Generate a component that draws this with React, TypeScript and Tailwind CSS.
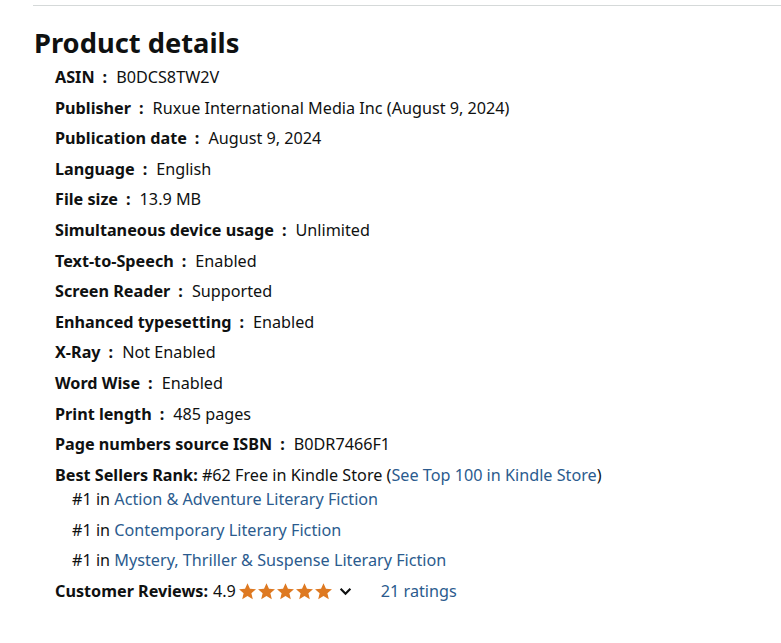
import React from 'react';

const details: [string, string][] = [
  ['ASIN', 'B0DCS8TW2V'],
  ['Publisher', 'Ruxue International Media Inc (August 9, 2024)'],
  ['Publication date', 'August 9, 2024'],
  ['Language', 'English'],
  ['File size', '13.9 MB'],
  ['Simultaneous device usage', 'Unlimited'],
  ['Text-to-Speech', 'Enabled'],
  ['Screen Reader', 'Supported'],
  ['Enhanced typesetting', 'Enabled'],
  ['X-Ray', 'Not Enabled'],
  ['Word Wise', 'Enabled'],
  ['Print length', '485 pages'],
  ['Page numbers source ISBN', 'B0DR7466F1'],
];

const ranks = [
  'Action & Adventure Literary Fiction',
  'Contemporary Literary Fiction',
  'Mystery, Thriller & Suspense Literary Fiction',
];

const Star = () => (
  <svg viewBox="0 0 24 24" className="w-[19px] h-[19px]" fill="#de7921">
    <path d="M12 1.5l3.1 7 7.6.7-5.8 5 1.8 7.5L12 17.8l-6.7 3.9 1.8-7.5-5.8-5 7.6-.7z" />
  </svg>
);

export default function App() {
  return (
    <div
      className="min-h-[643px] bg-white text-[#0f1111] text-[16.2px]"
      style={{ fontFamily: '"Noto Sans", "Open Sans", Arial, sans-serif' }}
    >
      <div className="pt-[5px] pl-[33px]">
        <div className="border-t border-[#d5d9d9]" />
      </div>

      <h2 className="ml-[34px] mt-[20px] text-[27.3px] font-bold leading-[34px]">Product details</h2>

      {/* detail bullets */}
      <ul className="ml-[55px] mt-[2px]">
        {details.map(([label, value]) => (
          <li key={label} className="leading-[30.6px] whitespace-nowrap">
            <span className="font-bold">
              {label}
              <span className="ml-[8px] mr-[9px]">:</span>
            </span>
            <span>{value}</span>
          </li>
        ))}
        <li className="leading-[30.6px] whitespace-nowrap">
          <span className="font-bold">Best Sellers Rank:</span> #62 Free in Kindle Store (
          <a className="text-[#2b5b8e]">See Top 100 in Kindle Store</a>)
          <ul className="ml-[17px] -mt-[6px]">
            {ranks.map((r) => (
              <li key={r} className="leading-[30.5px]">
                #1 in <a className="text-[#2b5b8e]">{r}</a>
              </li>
            ))}
          </ul>
        </li>
        <li className="leading-[30.6px] whitespace-nowrap flex items-center">
          <span className="font-bold">Customer Reviews:</span>
          <span className="ml-[5px]">4.9</span>
          <span className="flex ml-[2px]">
            <Star />
            <Star />
            <Star />
            <Star />
            <Star />
          </span>
          <svg viewBox="0 0 12 8" className="w-[13px] h-[9px] ml-[6px]" fill="none" stroke="#0f1111" strokeWidth="2">
            <path d="M1.5 1.5L6 6l4.5-4.5" />
          </svg>
          <a className="ml-[29px] text-[#2b5b8e]">21 ratings</a>
        </li>
      </ul>
    </div>
  );
}
